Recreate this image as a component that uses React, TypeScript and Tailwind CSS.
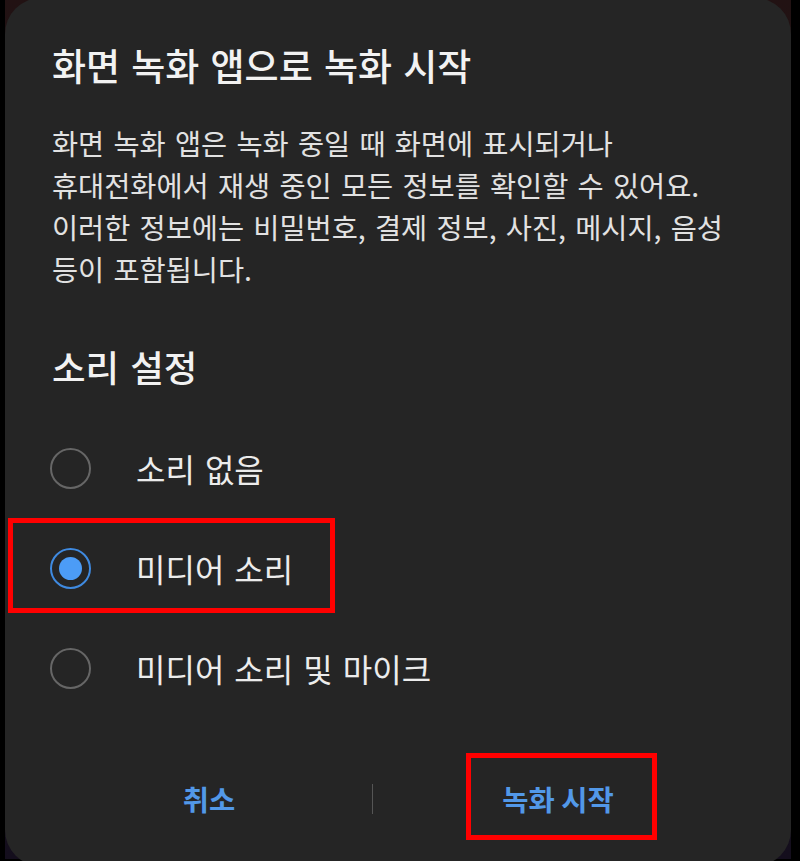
const OPTIONS = [
  { label: '소리 없음', checked: false },
  { label: '미디어 소리', checked: true },
  { label: '미디어 소리 및 마이크', checked: false },
];

function Radio({ checked }: { checked: boolean }) {
  if (checked) {
    return (
      <span className="flex h-[41px] w-[41px] shrink-0 items-center justify-center rounded-full border-2 border-[#3f8ae0]">
        <span className="h-[23px] w-[23px] rounded-full bg-[#4c9cf6]" />
      </span>
    );
  }
  return <span className="h-[41px] w-[41px] shrink-0 rounded-full border-2 border-[#666666]" />;
}

export default function App() {
  return (
    <div className="relative h-[861px] w-[800px] overflow-hidden bg-black pl-[5px] font-['Noto_Sans_CJK_KR','Noto_Sans',sans-serif] [word-spacing:0.18em]">
      {/* screen behind the dialog */}
      <div className="h-full w-[786px] bg-linear-to-b from-[#221213] via-[#1a1117] to-[#140e1d]">
        <div className="-mt-[2px] flex h-[868px] flex-col rounded-[36px] bg-[#252525] pl-[47px]">
          {/* Title */}
          <h1 className="pt-[43px] text-[37px] font-medium leading-[48px] text-[#f2f2f2]">
            화면 녹화 앱으로 녹화 시작
          </h1>

          {/* Description */}
          <p className="mt-[33px] text-[28.4px] leading-[42px] text-[#e2e2e2]">
            화면 녹화 앱은 녹화 중일 때 화면에 표시되거나
            <br />
            휴대전화에서 재생 중인 모든 정보를 확인할 수 있어요.
            <br />
            이러한 정보에는 비밀번호, 결제 정보, 사진, 메시지, 음성
            <br />
            등이 포함됩니다.
          </p>

          {/* Sound settings */}
          <h2 className="mt-[55px] text-[36.5px] font-medium leading-[44px] text-[#f2f2f2]">소리 설정</h2>

          <div className="mt-[29px] flex flex-col">
            {OPTIONS.map((opt) => (
              <div key={opt.label} className="-ml-[2px] flex h-[100px] items-center gap-[45px]">
                <Radio checked={opt.checked} />
                <span className="text-[32px] leading-[40px] text-[#ececec]">{opt.label}</span>
              </div>
            ))}
          </div>

          {/* Buttons */}
          <div className="mt-[41px] -ml-[42px] flex h-[80px] items-center">
            <button className="w-[362px] pl-[36px] text-center text-[28.5px] font-bold text-[#5298e8]">취소</button>
            <span className="h-[30px] w-px bg-[#555555]" />
            <button className="w-[370px] text-center text-[28.5px] font-bold text-[#5298e8]">녹화 시작</button>
          </div>
        </div>
      </div>

      {/* Annotation boxes */}
      <div className="absolute left-[8px] top-[518px] h-[95px] w-[327px] border-[5px] border-[#ff0000]" />
      <div className="absolute left-[466px] top-[753px] h-[87px] w-[191px] border-[5px] border-[#ff0000]" />
    </div>
  );
}
